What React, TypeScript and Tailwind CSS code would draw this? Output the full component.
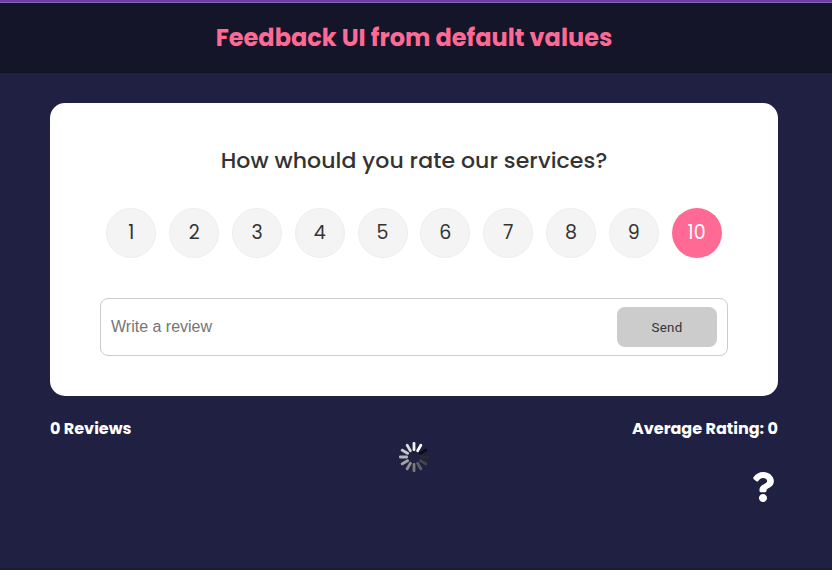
import { FaQuestion } from "react-icons/fa";

const ratings = [1, 2, 3, 4, 5, 6, 7, 8, 9, 10];

// Spoke shades, clockwise from twelve o'clock
const spokes = [
  "#f1f1f1", "#ffffff", "#0d0d14", "#29292e", "#454548", "#606062",
  "#7b7b7d", "#929293", "#a5a5a6", "#b7b7b8", "#c8c8c9", "#dadadb",
];

function Spinner() {
  return (
    <svg width="32" height="32" viewBox="-16 -16 32 32" className="block">
      {spokes.map((color, i) => (
        <rect key={i} x="-1.4" y="-15" width="2.8" height="9" rx="1.1" fill={color} transform={`rotate(${i * 30})`} />
      ))}
    </svg>
  );
}

export default function App() {
  return (
    <div className="flex h-[570px] w-[832px] flex-col overflow-hidden border-b-2 border-[#1b1a38] bg-[#202142] font-['Poppins','Inter',sans-serif]">
      <div className="h-[3px] shrink-0 border-b border-[#8b5fbb] bg-[#6b3fa0]" />
      <header className="flex h-[70px] shrink-0 items-center justify-center bg-[#141529] pr-1 text-[#ff6a95]">
        <h1 className="text-[24px] font-bold whitespace-nowrap">Feedback UI from default values</h1>
      </header>
      <main className="mt-[30px] ml-[50px] w-[728px]">
        <section className="h-[293px] rounded-[15px] bg-white px-[50px] pt-[41px] text-[#333333]">
          <h2 className="text-center text-[22px] leading-[34px] font-medium tracking-[0.1px] whitespace-nowrap">How whould you rate our services?</h2>
          <ul className="mt-[30px] flex justify-around">
            {ratings.map((n) => (
              <li
                key={n}
                className={
                  n === 10
                    ? "flex h-[50px] w-[50px] items-center justify-center rounded-full bg-[#ff6a95] pt-px text-[19px] text-white"
                    : "flex h-[50px] w-[50px] items-center justify-center rounded-full border border-[#eeeeee] bg-[#f4f4f4] pt-px text-[19px]"
                }
              >
                {n}
              </li>
            ))}
          </ul>
          <div className="mt-10 flex h-[58px] items-center justify-between rounded-lg border border-[#cccccc] px-[10px] font-['Liberation_Sans',sans-serif]">
            <span className="text-[16px] text-[#757575]">Write a review</span>
            <button className="h-10 w-[100px] rounded-lg bg-[#cccccc] pt-px font-['Roboto',sans-serif] text-[13.33px] tracking-[0.3px] text-[#333333]">Send</button>
          </div>
        </section>
        <div className="mt-[21px] flex justify-between text-[16px] leading-6 font-bold whitespace-nowrap text-white">
          <span>0 Reviews</span>
          <span>Average Rating: 0</span>
        </div>
        <div className="flex justify-center">
          <Spinner />
        </div>
        <div className="-mt-px flex justify-end text-white">
          <FaQuestion size={30} />
        </div>
      </main>
    </div>
  );
}
